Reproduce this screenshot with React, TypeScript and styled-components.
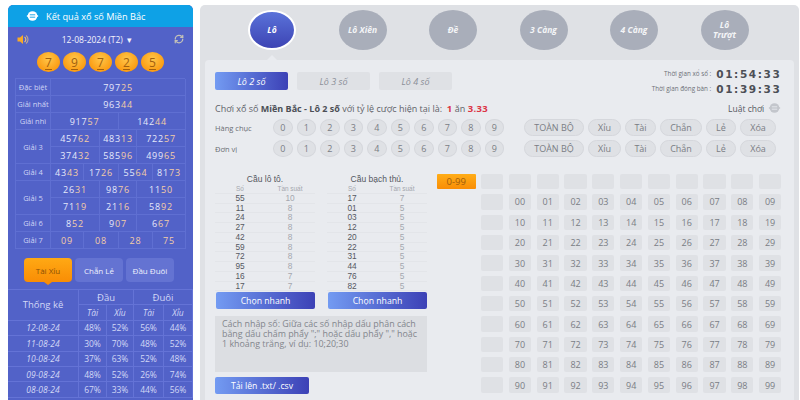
import React from "react";
import styled, { createGlobalStyle, css } from "styled-components";
import { RefreshCw } from "lucide-react";

const Global = createGlobalStyle`
  html, body { margin: 0; padding: 0; background: #fff; height: 400px; overflow: hidden; }
  * { box-sizing: border-box; }
  body { font-family: "Open Sans", "Liberation Sans", sans-serif; }
`;

const Page = styled.div`
  display: flex; gap: 7px; width: 800px; height: 400px; padding: 5px 4px 0 8px; overflow: hidden;
`;
const Sidebar = styled.aside`
  width: 185px; flex: none; background: #5262c8; border-radius: 5px 5px 0 0; height: 395px; overflow: hidden;
`;
const SideHead = styled.div`
  height: 22px; background: #0ea1e6; display: flex; align-items: center; gap: 7px; padding-left: 18px;
  color: #fff; font-size: 9.2px; border-radius: 5px 5px 0 0;
`;
const DateRow = styled.div`
  display: flex; align-items: center; justify-content: space-between; padding: 0 9px; height: 22px; margin-top: 1px;
  color: #f2f3fc; font-size: 8.5px;
`;
const DateText = styled.span` margin-right: 9px; `;
const Balls = styled.div`
  display: flex; justify-content: center; gap: 3px; margin: 2px 0 6px;
`;
const Ball = styled.div`
  width: 23px; height: 20px; border-radius: 50%;
  background: radial-gradient(circle at 50% 35%, #ffc64a, #fb9a10 75%, #e8840a);
  color: #a2600e; font-size: 12px; font-weight: 500; display: flex; align-items: center; justify-content: center;
  text-decoration: underline; text-underline-offset: 2px; text-decoration-thickness: 1px;
`;
const Results = styled.div`
  margin: 0 8px 0 7px; display: grid; grid-template-columns: 35px 33px 16px 19px 18px 16px 33px;
  grid-auto-rows: 17px; border-top: 1px solid #5f6fd2; border-left: 1px solid #5f6fd2;
`;
const Cell = styled.div<{ $span?: number; $rows?: number; $label?: boolean }>`
  grid-column: span ${(p) => p.$span ?? 1};
  grid-row: span ${(p) => p.$rows ?? 1};
  border-right: 1px solid #5f6fd2; border-bottom: 1px solid #5f6fd2;
  display: flex; align-items: center; justify-content: center; white-space: nowrap;
  color: #e6e9fb;
  ${(p) => (p.$label ? css`font-size: 7.5px; color: #cfd4f5;` : css`font-size: 9px; letter-spacing: 0.8px;`)}
`;
const Peach = styled.span` color: #f4cda6; `;
const TabRow = styled.div`
  display: flex; gap: 3px; justify-content: center; margin: 9px 0 0; padding-right: 3px;
`;
const SideTab = styled.div<{ $on?: boolean }>`
  position: relative; width: 48px; height: 24px; border-radius: 4px; display: flex; align-items: center; justify-content: center;
  font-size: 8px;
  ${(p) => p.$on
    ? css`background: linear-gradient(#ffa914, #f98d05); color: #8a4f05;
        &::after { content: ""; position: absolute; left: 50%; bottom: -3px; margin-left: -4px;
          border-left: 4px solid transparent; border-right: 4px solid transparent; border-top: 3px solid #f98d05; }`
    : css`background: #6473d2; color: #eef0fc;`}
`;
const Stats = styled.div`
  margin-top: 7px; display: grid; grid-template-columns: 71px 28px 27px 30px 29px; grid-auto-rows: 15.4px;
  border-top: 1px solid #6473d6;
`;
const StatCell = styled.div<{ $rows?: number; $span?: number; $big?: boolean; $it?: boolean; $date?: boolean }>`
  grid-column: span ${(p) => p.$span ?? 1}; grid-row: span ${(p) => p.$rows ?? 1};
  border-right: 1px solid #6473d6; border-bottom: 1px solid #6473d6;
  display: flex; align-items: center; justify-content: center; color: #d3d8f6; white-space: nowrap;
  font-size: ${(p) => (p.$big ? 9.5 : 8.5)}px;
  font-style: ${(p) => (p.$it || p.$date ? "italic" : "normal")};
`;

const Main = styled.main`
  flex: 1; height: 395px; background: #dfe1e5; border-radius: 5px 5px 0 0; padding: 5px 5px 0; display: flex; flex-direction: column;
`;
const GameRow = styled.div`
  height: 50px; display: flex; gap: 42.5px; padding-left: 43px; flex: none;
`;
const Game = styled.div<{ $on?: boolean }>`
  position: relative; width: 48px; height: 40px; border-radius: 50%; flex: none; display: flex; align-items: center; justify-content: center;
  padding: 0 8px; text-align: center; font-size: 8.5px; line-height: 10px; font-weight: 700; font-style: italic; color: #f4f5f7;
  background: #a9aeba;
  ${(p) => p.$on && css`
    background: linear-gradient(#5a72d9, #3d44b4); border: 2px solid #fff; color: #fff;
    &::after { content: ""; position: absolute; left: 50%; bottom: -12px; margin-left: -5px;
      border-left: 5px solid transparent; border-right: 5px solid transparent; border-bottom: 5px solid #e9ebef; }
  `}
`;
const Inner = styled.div`
  flex: 1; background: #e9ebef; border-radius: 4px 4px 0 0; padding: 8px 13px 0 10px; min-height: 0;
`;
const TopRow = styled.div` display: flex; justify-content: space-between; height: 29px; `;
const Tabs = styled.div` display: flex; gap: 9px; margin-top: 4px; `;
const SubTab = styled.div<{ $on?: boolean }>`
  width: 73px; height: 18px; border-radius: 2px; display: flex; align-items: center; justify-content: center;
  font-size: 9px; font-style: italic;
  ${(p) => p.$on ? css`background: linear-gradient(90deg, #739bf2, #3c41b6); color: #fff;` : css`background: #dfe1e5; color: #8b8f98;`}
`;
const Timers = styled.div` display: grid; grid-template-columns: auto 65px; grid-auto-rows: 15px; align-items: center; margin-top: -2px; `;
const TimerLabel = styled.span` font-size: 6.3px; color: #6d7077; text-align: right; padding-right: 5px; white-space: nowrap; `;
const TimerValue = styled.span` font-size: 10.5px; font-weight: 700; color: #4c4f56; letter-spacing: 1.6px; white-space: nowrap; font-family: "DejaVu Sans", sans-serif; `;
const RateRow = styled.div` display: flex; justify-content: space-between; align-items: center; height: 18px; margin-top: 2px; `;
const Rate = styled.div` font-size: 9px; color: #5f6269; white-space: nowrap; b { color: #4c4f56; } `;
const Red = styled.b` && { color: #dc3545; font-size: 9.5px; letter-spacing: .3px; } `;
const Rules = styled.div` display: flex; align-items: center; gap: 4px; font-size: 8.5px; color: #55585f; `;
const PickRow = styled.div` display: flex; align-items: center; height: 21px; `;
const PickLabel = styled.div` width: 58px; font-size: 7.5px; color: #6b6e75; flex: none; `;
const Digit = styled.div`
  width: 19.5px; height: 16.5px; border-radius: 50%; background: #dfe1e5; border: 1px solid #d5d7dc; flex: none; margin-right: 4px;
  display: flex; align-items: center; justify-content: center; font-size: 9px; color: #7a7d84;
`;
const Pills = styled.div` display: flex; gap: 4px; margin-left: 16px; `;
const Pill = styled.div<{ $w: number }>`
  width: ${(p) => p.$w}px; height: 17px; border-radius: 9px; background: #dfe1e5; border: 1px solid #d5d7dc;
  display: flex; align-items: center; justify-content: center; font-size: 9px; color: #7a7d84; white-space: nowrap;
`;
const Lower = styled.div` display: flex; gap: 10px; margin-top: 15px; `;
const LeftCol = styled.div` width: 212px; flex: none; `;
const Lists = styled.div` display: flex; gap: 12px; `;
const ListBox = styled.div` width: 100px; `;
const ListTitle = styled.div` text-align: center; font-size: 8.5px; font-family: "Liberation Sans", sans-serif; color: #55585f; height: 10px; line-height: 10px; white-space: nowrap; `;
const ListRow = styled.div<{ $head?: boolean }>`
  display: grid; grid-template-columns: 50px 50px; height: 9.75px; line-height: 9.75px; text-align: center;
  font-family: "Liberation Sans", sans-serif;
  font-size: ${(p) => (p.$head ? 6.4 : 8.3)}px; color: ${(p) => (p.$head ? "#a4a7ae" : "#55585f")};
  border-bottom: 1px solid #e3e5e9; white-space: nowrap;
`;
const Freq = styled.span` color: #a4a7ae; `;
const BlueBtn = styled.div<{ $w: number }>`
  width: ${(p) => p.$w}px; height: 17px; border-radius: 2px; display: flex; align-items: center; justify-content: center;
  background: linear-gradient(90deg, #739bf2, #3c41b6); color: #fff; font-size: 8.7px;
`;
const ChooseBtn = styled(BlueBtn)` margin: 1px 0 0 1px; `;
const Note = styled.div`
  margin-top: 7px; height: 56px; background: #dcdee2; padding: 3px 8px 3px 7px; font-size: 8.9px; line-height: 10px; color: #83868d;
`;
const Upload = styled(BlueBtn)` margin-top: 5px; `;
const Grid = styled.div` display: grid; grid-template-columns: 38.5px repeat(11, 22.3px); column-gap: 5.5px; grid-auto-rows: 15.3px; row-gap: 5.05px; `;
const Range = styled.div`
  background: linear-gradient(#ffad18, #f98d05); border-radius: 1px; color: #9c5c0c; font-size: 9.5px;
  display: flex; align-items: center; justify-content: center;
`;
const Num = styled.div`
  background: #dfe1e5; border-radius: 2px; color: #7a7d84; font-size: 9px; display: flex; align-items: center; justify-content: center;
`;
const Spacer = styled.div``;

const Logo = ({ color, line }: { color: string; line: string }) => (
  <svg width="13" height="12" viewBox="0 0 13 12">
    <path d="M0.5 6L2.5 4.5v3zM12.5 6l-2-1.5v3z" fill={color} />
    <circle cx="6.5" cy="6" r="4.8" fill={color} />
    <path d="M3.8 4.8h5.4M3.8 7.2h5.4" stroke={line} strokeWidth="0.9" />
  </svg>
);

const Speaker = () => (
  <svg width="12" height="11" viewBox="0 0 12 11">
    <path d="M0.5 3.5h2.5L6 1v9L3 7.5H0.5z" fill="#f7a928" />
    <path d="M7.5 3a3 3 0 0 1 0 5" fill="none" stroke="#e9c07a" strokeWidth="1.2" />
    <path d="M9 1.5a5 5 0 0 1 0 8" fill="none" stroke="#b7a39a" strokeWidth="1.2" />
  </svg>
);

const Nr = ({ a, b }: { a: string; b: string }) => (<>{a}<Peach>{b}</Peach></>);

const games = ["Lô", "Lô Xiên", "Đề", "3 Càng", "4 Càng", "Lô Trượt"];
const lo = [["55", "10"], ["11", "8"], ["24", "8"], ["27", "8"], ["42", "8"], ["59", "8"], ["72", "8"], ["95", "8"], ["16", "7"], ["17", "7"]];
const bach = [["17", "7"], ["01", "5"], ["03", "5"], ["12", "5"], ["20", "5"], ["22", "5"], ["31", "5"], ["44", "5"], ["76", "5"], ["82", "5"]];
const stats = [
  ["12-08-24", "48%", "52%", "56%", "44%"], ["11-08-24", "30%", "70%", "48%", "52%"], ["10-08-24", "37%", "63%", "52%", "48%"],
  ["09-08-24", "48%", "52%", "26%", "74%"], ["08-08-24", "67%", "33%", "44%", "56%"],
];
const pills: [string, number][] = [["TOÀN BỘ", 60], ["Xỉu", 33], ["Tài", 31], ["Chẵn", 42], ["Lẻ", 30], ["Xóa", 36]];

const Picker = ({ label }: { label: string }) => (
  <PickRow>
    <PickLabel>{label}</PickLabel>
    {Array.from({ length: 10 }, (_, i) => <Digit key={i}>{i}</Digit>)}
    <Pills>{pills.map(([t, w]) => <Pill key={t} $w={w}>{t}</Pill>)}</Pills>
  </PickRow>
);

const List = ({ title, rows }: { title: string; rows: string[][] }) => (
  <ListBox>
    <ListTitle>{title}</ListTitle>
    <ListRow $head><span>Số</span><Freq>Tần suất</Freq></ListRow>
    {rows.map((r) => <ListRow key={r[0]}><span>{r[0]}</span><Freq>{r[1]}</Freq></ListRow>)}
    <ChooseBtn $w={99}>Chọn nhanh</ChooseBtn>
  </ListBox>
);

export default function App() {
  return (
    <Page>
      <Global />
      <Sidebar>
        <SideHead><Logo color="#fff" line="#0ea1e6" />Kết quả xổ số Miền Bắc</SideHead>
        <DateRow>
          <Speaker />
          <DateText>12-08-2024 (T2) &nbsp;▾</DateText>
          <RefreshCw size={10} color="#c4c2b8" strokeWidth={3} />
        </DateRow>
        <Balls>{["7", "9", "7", "2", "5"].map((n, i) => <Ball key={i}>{n}</Ball>)}</Balls>
        <Results>
          <Cell $label>Đặc biệt</Cell><Cell $span={6}><Nr a="797" b="25" /></Cell>
          <Cell $label>Giải nhất</Cell><Cell $span={6}><Nr a="963" b="44" /></Cell>
          <Cell $label>Giải nhì</Cell><Cell $span={3}><Nr a="917" b="57" /></Cell><Cell $span={3}><Nr a="142" b="44" /></Cell>
          <Cell $label $rows={2}>Giải 3</Cell>
          <Cell $span={2}><Nr a="457" b="62" /></Cell><Cell $span={2}><Nr a="483" b="13" /></Cell><Cell $span={2}><Nr a="722" b="57" /></Cell>
          <Cell $span={2}><Nr a="374" b="32" /></Cell><Cell $span={2}><Nr a="585" b="96" /></Cell><Cell $span={2}><Nr a="499" b="65" /></Cell>
          <Cell $label>Giải 4</Cell>
          <Cell><Nr a="43" b="43" /></Cell><Cell $span={2}><Nr a="17" b="26" /></Cell><Cell $span={2}><Nr a="55" b="64" /></Cell><Cell><Nr a="81" b="73" /></Cell>
          <Cell $label $rows={2}>Giải 5</Cell>
          <Cell $span={2}><Nr a="26" b="31" /></Cell><Cell $span={2}><Nr a="98" b="76" /></Cell><Cell $span={2}><Nr a="11" b="50" /></Cell>
          <Cell $span={2}><Nr a="71" b="19" /></Cell><Cell $span={2}><Nr a="21" b="16" /></Cell><Cell $span={2}><Nr a="58" b="92" /></Cell>
          <Cell $label>Giải 6</Cell>
          <Cell $span={2}><Nr a="8" b="52" /></Cell><Cell $span={2}><Nr a="9" b="07" /></Cell><Cell $span={2}><Nr a="6" b="67" /></Cell>
          <Cell $label>Giải 7</Cell>
          <Cell><Peach>09</Peach></Cell><Cell $span={2}><Peach>08</Peach></Cell><Cell $span={2}><Peach>28</Peach></Cell><Cell><Peach>75</Peach></Cell>
        </Results>
        <TabRow>
          <SideTab $on>Tài Xỉu</SideTab><SideTab>Chẵn Lẻ</SideTab><SideTab>Đầu Đuôi</SideTab>
        </TabRow>
        <Stats>
          <StatCell $rows={2} $big>Thống kê</StatCell>
          <StatCell $span={2} $big>Đầu</StatCell><StatCell $span={2} $big>Đuôi</StatCell>
          <StatCell $it>Tài</StatCell><StatCell $it>Xỉu</StatCell><StatCell $it>Tài</StatCell><StatCell $it>Xỉu</StatCell>
          {stats.map((r) => (
            <React.Fragment key={r[0]}>
              <StatCell $date>{r[0]}</StatCell>
              <StatCell>{r[1]}</StatCell><StatCell>{r[2]}</StatCell><StatCell>{r[3]}</StatCell><StatCell>{r[4]}</StatCell>
            </React.Fragment>
          ))}
        </Stats>
      </Sidebar>
      <Main>
        <GameRow>{games.map((g, i) => <Game key={g} $on={i === 0}>{g}</Game>)}</GameRow>
        <Inner>
          <TopRow>
            <Tabs><SubTab $on>Lô 2 số</SubTab><SubTab>Lô 3 số</SubTab><SubTab>Lô 4 số</SubTab></Tabs>
            <Timers>
              <TimerLabel>Thời gian xổ số :</TimerLabel><TimerValue>01:54:33</TimerValue>
              <TimerLabel>Thời gian đóng bàn :</TimerLabel><TimerValue>01:39:33</TimerValue>
            </Timers>
          </TopRow>
          <RateRow>
            <Rate>Chơi xổ số <b>Miền Bắc - Lô 2 số</b> với tỷ lệ cược hiện tại là: &nbsp;<Red>1</Red> ăn <Red>3.33</Red></Rate>
            <Rules>Luật chơi <Logo color="#c3c6cc" line="#e9ebef" /></Rules>
          </RateRow>
          <Picker label="Hàng chục" />
          <Picker label="Đơn vị" />
          <Lower>
            <LeftCol>
              <Lists>
                <List title="Cầu lô tô." rows={lo} />
                <List title="Cầu bạch thủ." rows={bach} />
              </Lists>
              <Note>Cách nhập số: Giữa các số nhập dấu phân cách bằng dấu chấm phẩy ";" hoặc dấu phẩy "," hoặc 1 khoảng trắng, ví dụ: 10;20;30</Note>
              <Upload $w={94}>Tải lên .txt/ .csv</Upload>
            </LeftCol>
            <Grid>
              <Range>0-99</Range>
              {Array.from({ length: 11 }, (_, i) => <Num key={i} />)}
              {Array.from({ length: 10 }, (_, r) => (
                <React.Fragment key={r}>
                  <Spacer />
                  <Num />
                  {Array.from({ length: 10 }, (_, c) => <Num key={c}>{`${r}${c}`}</Num>)}
                </React.Fragment>
              ))}
            </Grid>
          </Lower>
        </Inner>
      </Main>
    </Page>
  );
}
